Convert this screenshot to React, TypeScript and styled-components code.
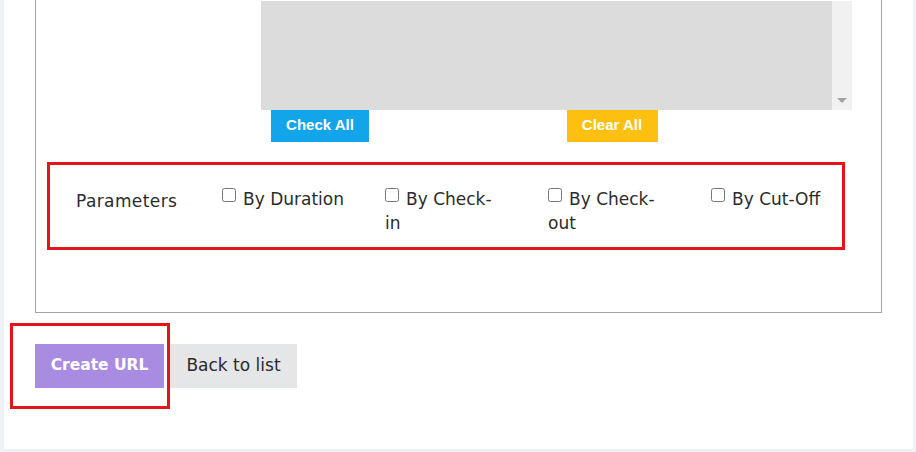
import React from 'react';
import styled, { createGlobalStyle } from 'styled-components';

const GlobalStyle = createGlobalStyle`
  html, body {
    margin: 0;
    padding: 0;
    background: #eef1f6;
    font-family: "DejaVu Sans", "Noto Sans", sans-serif;
    color: #2b2b2b;
  }
  * { box-sizing: border-box; }
`;

const Panel = styled.div`
  margin: 0 3px 0 4px;
  height: 449px;
  background: #ffffff;
  padding: 0 31px;
  overflow: hidden;
`;

const Fieldset = styled.div`
  margin-top: -20px;
  width: 847px;
  border: 1px solid #a3a3a3;
  padding: 20px 0 62px 0;
`;

const FieldRow = styled.div`
  display: flex;
  padding-left: 225px;
`;

const FieldCol = styled.div`
  width: 591px;
`;

const ListBox = styled.div`
  display: flex;
  height: 109px;
`;

const ListArea = styled.div`
  flex: 1;
  background: #dcdcdc;
`;

const ScrollTrack = styled.div`
  width: 20px;
  background: #f1f1f1;
  display: flex;
  align-items: flex-end;
  justify-content: center;
  padding-bottom: 7px;
`;

const ArrowDown = styled.div`
  width: 0;
  height: 0;
  border-left: 5px solid transparent;
  border-right: 5px solid transparent;
  border-top: 5px solid #a3a3a3;
`;

const ButtonPair = styled.div`
  display: grid;
  grid-template-columns: 1fr 1fr;
`;

const SmallCell = styled.div`
  padding-left: 10px;
`;

const SmallButton = styled.button<{ $bg: string; $w: number }>`
  width: ${p => p.$w}px;
  height: 32px;
  border: none;
  background: ${p => p.$bg};
  color: #ffffff;
  font-family: "Liberation Sans", Arial, sans-serif;
  font-weight: 700;
  font-size: 15px;
  padding: 0 0 3px 0;
  cursor: pointer;
`;

const ParamsBox = styled.div`
  margin: 20px 0 0 11px;
  width: 798px;
  height: 88px;
  border: 3px solid #e4141b;
  display: flex;
  align-items: flex-start;
  padding: 22px 0 0 26px;
`;

const ParamsLabel = styled.div`
  flex: none;
  width: 146px;
  font-size: 17px;
  letter-spacing: 0.4px;
  line-height: 24px;
  padding-top: 2px;
`;

const OptionCell = styled.div`
  flex: none;
  width: 163px;
`;

const Option = styled.label<{ $nowrap?: boolean }>`
  display: block;
  max-width: 116px;
  font-size: 17px;
  line-height: 24px;
  white-space: ${p => (p.$nowrap ? 'nowrap' : 'normal')};
`;

const Check = styled.input`
  width: 14px;
  height: 14px;
  margin: 0 7px 0 0;
  vertical-align: 3px;
`;

const Actions = styled.div`
  margin-top: 31px;
  display: flex;
  gap: 6px;
`;

const ButtonWrap = styled.div`
  position: relative;
`;

const Highlight = styled.div`
  position: absolute;
  left: -25px;
  top: -21px;
  width: 160px;
  height: 86px;
  border: 3px solid #e4141b;
  pointer-events: none;
`;

const ActionButton = styled.button<{ $primary?: boolean; $w: number }>`
  width: ${p => p.$w}px;
  height: 44px;
  border: none;
  padding: 0 0 2px 0;
  background: ${p => (p.$primary ? '#a98ce2' : '#e4e6e8')};
  color: ${p => (p.$primary ? '#ffffff' : '#2b2b2b')};
  font-family: "DejaVu Sans", "Noto Sans", sans-serif;
  font-size: ${p => (p.$primary ? 15.5 : 17)}px;
  font-weight: ${p => (p.$primary ? 600 : 400)};
  cursor: pointer;
`;

const options = [
  { label: 'By Duration', nowrap: true },
  { label: 'By Check-in', nowrap: false },
  { label: 'By Check-out', nowrap: false },
  { label: 'By Cut-Off', nowrap: true },
];

export default function App() {
  return (
    <>
      <GlobalStyle />
      <Panel>
        <Fieldset>
          <FieldRow>
            <FieldCol>
              <ListBox>
                <ListArea />
                <ScrollTrack>
                  <ArrowDown />
                </ScrollTrack>
              </ListBox>
              <ButtonPair>
                <SmallCell>
                  <SmallButton $bg="#12a5e9" $w={98}>Check All</SmallButton>
                </SmallCell>
                <SmallCell>
                  <SmallButton $bg="#fdc010" $w={91}>Clear All</SmallButton>
                </SmallCell>
              </ButtonPair>
            </FieldCol>
          </FieldRow>
          <ParamsBox>
            <ParamsLabel>Parameters</ParamsLabel>
            {options.map(o => (
              <OptionCell key={o.label}>
                <Option $nowrap={o.nowrap}>
                  <Check type="checkbox" />
                  {o.label}
                </Option>
              </OptionCell>
            ))}
          </ParamsBox>
        </Fieldset>
        <Actions>
          <ButtonWrap>
            <Highlight />
            <ActionButton $primary $w={129}>Create URL</ActionButton>
          </ButtonWrap>
          <ActionButton $w={127}>Back to list</ActionButton>
        </Actions>
      </Panel>
    </>
  );
}
